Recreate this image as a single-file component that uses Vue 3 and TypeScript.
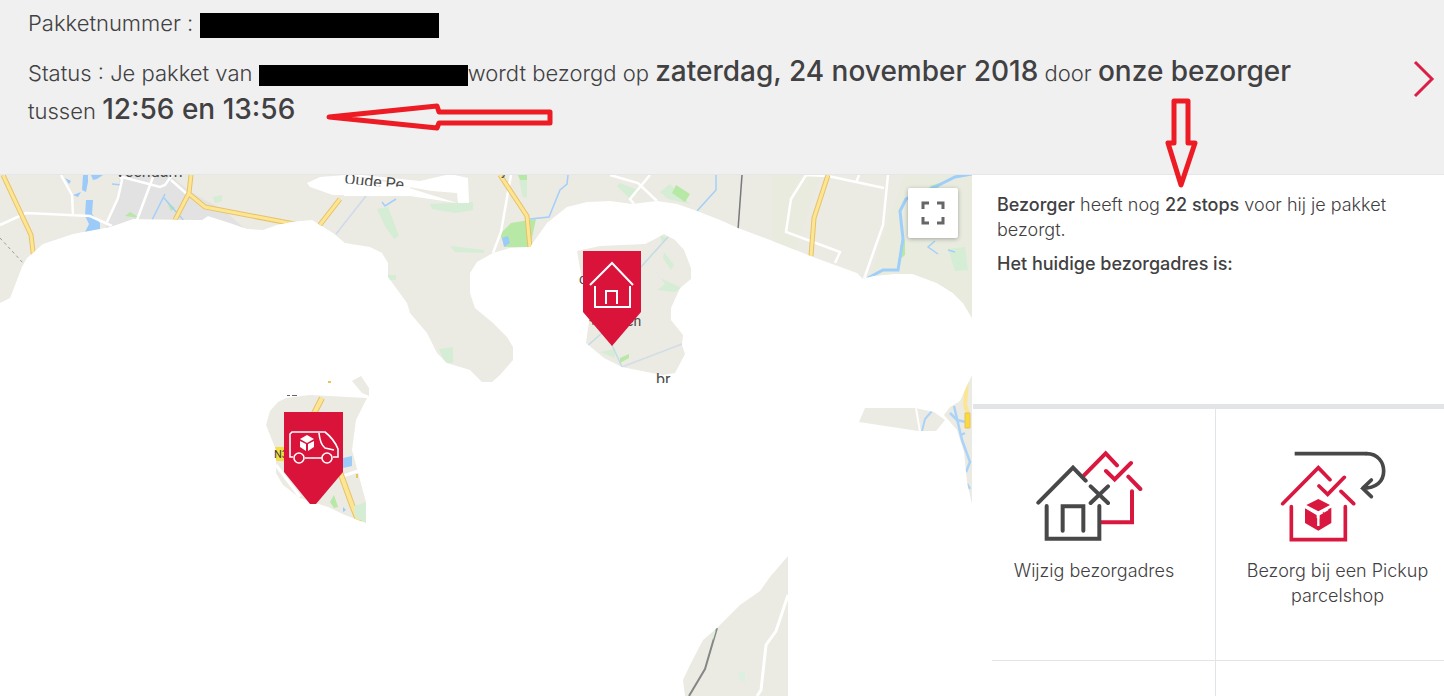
<script setup lang="ts">
interface DeliveryOption {
  id: string
  label: string
}

const options: DeliveryOption[] = [
  { id: 'address', label: 'Wijzig bezorgadres' },
  { id: 'pickup', label: 'Bezorg bij een Pickup parcelshop' },
]

const landTop =
  'M0 175H972V318L963 303L953 293L937 283L913 274H893L873 276L863 279L857 273L813 257L773 241L738 228L720 220L697 211L677 204L657 201L632 204L610 201L587 202L567 207L547 223L530 247L510 248L493 253L477 262L470 273V293L475 308L493 323L507 337L513 347V360L500 375L492 382H482L470 370L447 363L437 353L427 333L410 313L407 303L388 277V263L382 253L370 247L345 243L333 233L312 220L290 222L277 225L263 230L247 229L230 223L208 216L202 220L133 219L110 227L73 234L43 244L27 258L22 267L12 293L10 298L0 303Z'
const landHome =
  'M577 251L600 246L645 244L655 239L664 234L675 240L684 250L691 268V279L680 288L671 308V320L683 335L682 345L685 354L675 373L663 375L652 373L622 367L604 358L586 343L592 300L582 280Z'
const landVan =
  'M286 398L310 395L367 398L356 420L352 450L360 480L366 502V523L345 515L328 507L300 498L283 485L276 473V450L266 425L270 411L278 402Z'
const landEast = 'M865 408H915L934 412L945 420L936 431H918L859 422Z'
const landEdge = 'M972 375V504L967 482L964 452L957 430L944 415L950 407L960 401Z'
const landSouth =
  'M788 556V696H685L683 680L690 665L703 640L717 628L740 605L760 591L770 577Z'
</script>

<template>
  <div class="page">
    <header class="status">
      <div class="status-text">
        <p class="parcel">Pakketnummer : <span class="mask mask-number"></span></p>
        <p class="state">
          Status : Je pakket van <span class="mask mask-sender"></span>wordt bezorgd op
          <strong>zaterdag, 24 november 2018</strong> door <strong>onze bezorger</strong> tussen
          <strong>12:56 en 13:56</strong>
        </p>
      </div>
      <button class="next" type="button" aria-label="Volgende">
        <svg width="24" height="38" viewBox="0 0 24 38" fill="none" stroke="#dc1e46" stroke-width="3">
          <path d="M3 2L20 19L3 36" />
        </svg>
      </button>
      <svg class="pointer pointer-time" width="228" height="28" viewBox="326 103 228 28">
        <path d="M329 117L437 106L439 112H550V123H439L437 128Z" />
      </svg>
      <svg class="pointer pointer-stops" width="34" height="92" viewBox="1165 98 34 92">
        <path d="M1174 101H1188V143H1195L1181 185L1168 143H1174Z" />
      </svg>
    </header>

    <main class="content">
      <section class="map" aria-label="Kaart">
        <svg class="map-canvas" viewBox="0 175 972 521" preserveAspectRatio="xMinYMin slice">
          <defs>
            <clipPath id="clip-top"><path :d="landTop" /></clipPath>
            <clipPath id="clip-home"><path :d="landHome" /></clipPath>
            <clipPath id="clip-van"><path :d="landVan" /></clipPath>
            <clipPath id="clip-east"><path :d="landEast" /></clipPath>
            <clipPath id="clip-edge"><path :d="landEdge" /></clipPath>
            <clipPath id="clip-south"><path :d="landSouth" /></clipPath>
          </defs>

          <g clip-path="url(#clip-top)" fill="none">
            <path fill="#ebeae3" d="M0 175H972V400H0Z" />
            <path fill="#e2e2e2" d="M120 175H170L189 191L225 211L245 229H105L118 195Z" />
            <path fill="#e8ebde" d="M772 175H820L795 250L772 242ZM905 175H972V320L870 280L885 230Z" />
            <g fill="#d5edd5">
              <path d="M430 204L473 202V210L455 213L432 209ZM377 209L388 207L399 236L394 239L386 228ZM450 246L484 250V253L455 252ZM388 275L396 275V280H388ZM439 349L453 347V363H445ZM620 183L640 191L630 199L617 186ZM660 192L670 184L690 204L668 199ZM213 197L222 195V201L215 203ZM519 180L527 176V197L523 198ZM948 249L965 247L968 270L955 271Z" />
            </g>
            <path fill="#b8e8a5" d="M500 234L511 223L536 219L530 247H505ZM518 175H527V180H520ZM676 185L690 194L685 202L672 193ZM125 216L130 212L140 218ZM167 202L175 208L171 211ZM905 239V255L900 259V246ZM930 186L946 181L935 190Z" />
            <path fill="#9ccbfa" d="M83 175H88V182L86 192L82 190ZM91 175H103L97 179L93 180ZM65 178L71 181L69 184ZM73 195L81 192L78 197ZM86 200H93L92 214L100 223V234H84L89 224L85 216ZM502 238L508 236L510 243L504 247Z" />
            <path stroke="#a3cffa" stroke-width="1.5" d="M165 194L152 220M164 198L185 222M382 202L385 206L396 199M568 175L567 184L560 190L549 217L530 219M716 175V190L697 211M112 184L122 185" />
            <path stroke="#cfd9ec" stroke-width="1.5" d="M336 234L366 196" />
            <path stroke="#9dcffa" stroke-width="3" d="M972 174L955 177L935 187L906 199L900 211L903 239L898 270L883 270L868 278" />
            <path stroke="#a3cffa" stroke-width="1.5" d="M935 241L928 247L938 254M948 250L955 252" />
            <g stroke="#fff" stroke-width="2.5">
              <path d="M61 175L72 195L73 215M0 225L26 213L90 216L112 226M120 175L122 180L118 198L107 222M122 177L160 187L165 185L172 175M153 177L137 220M171 180L187 194M511 175L501 232L493 253M610 175L638 183L657 201M650 175L630 199L634 204M806 175L791 199L786 232L840 252L835 263M806 175L828 176L884 188M859 175L856 183M888 175L883 225L864 279" />
            </g>
            <g stroke="#e8c166" stroke-width="5">
              <path d="M3 175L31 235L34 260M191 175L189 193L175 220M188 193L205 207L310 227M340 199L319 226M500 175L527 216L530 248M828 175L814 218L811 256" />
            </g>
            <g stroke="#fce694" stroke-width="3">
              <path d="M3 175L31 235L34 260M191 175L189 193L175 220M188 193L205 207L310 227M340 199L319 226M500 175L527 216L530 248M828 175L814 218L811 256" />
            </g>
            <path stroke="#77797b" stroke-width="1.5" d="M742 175L738 230" />
            <path stroke="#999" stroke-dasharray="3 3" d="M0 238L24 264" />
            <path fill="#fff" d="M307 183L320 177L346 175L403 185L385 180L340 174H352L420 181L450 174L468 178L469 203H458L457 193L432 191L403 186L457 203L410 196L333 195L310 187Z" />
            <g class="place">
              <text class="town" x="115" y="177">Veendam</text>
              <text class="town" x="344" y="184" transform="rotate(6 344 184)">Oude Pe</text>
              <text x="501" y="175">y</text>
            </g>
            <path fill="#fff" d="M344 183L372 186L410 187V196H344Z" />
          </g>

          <g clip-path="url(#clip-home)" fill="none">
            <path fill="#ebeae3" d="M560 230H700V380H560Z" />
            <path fill="#d5edd5" d="M660 235L668 238L662 243ZM664 252L674 265L671 270L663 258ZM650 265L660 278L682 288L675 292L657 290L665 284ZM600 352L615 349V358Z" />
            <path stroke="#c2dce6" stroke-width="1.5" d="M668 237L640 268M586 347L602 333M612 345L622 367" />
            <path stroke="#d3dde8" stroke-width="1.5" d="M622 367L682 344" />
            <path fill="#b8e8a5" d="M620 358L629 354V358L620 363Z" />
          </g>
          <g class="place">
            <text x="579" y="284">c</text>
            <text x="589" y="326">+</text>
            <text x="626" y="326">en</text>
            <text class="town" x="656" y="385">br</text>
          </g>
          <path fill="#fff" d="M650 383H680V390H650Z" />
          <path fill="#d9133a" d="M583 251H641V312L612 346L583 312Z" />
          <g fill="none" stroke="#fff" stroke-width="2">
            <path d="M590 285L612 263L633 285M595 286V307H630V286M606 304V291H617V304" />
          </g>

          <path fill="#ebeae3" d="M352 381L361 376L369 388V396L362 393Z" />
          <g clip-path="url(#clip-van)" fill="none">
            <path fill="#ebeae3" d="M260 390H370V530H260Z" />
            <path stroke="#fff" stroke-width="3" d="M276 465L300 497M340 477L358 471" />
            <path stroke="#e8c166" stroke-width="6" d="M322 398L308 425M340 472L352 505L360 525" />
            <path stroke="#fce694" stroke-width="4" d="M322 398L308 425M340 472L352 505L360 525" />
            <path fill="#9ccbfa" d="M343 458L352 456V466L343 468ZM343 507L346 510L343 512Z" />
            <path fill="#b8e8a5" d="M330 502L334 495L338 507L334 508Z" />
            <path fill="#d5edd5" d="M354 506L366 502V523L355 517Z" />
            <path fill="#f6df45" d="M275 447H290V461H275Z" />
          </g>
          <text class="road" x="274" y="458">N3</text>
          <path fill="#666" d="M287 395H290V396H287ZM292 395H297V396H292Z" />
          <path fill="#e9c35c" d="M356 474H358V478H356ZM328 381H331V383H328Z" />
          <path fill="#d9133a" d="M284 412H343V472L316 504H310L284 472Z" />
          <g fill="none" stroke="#fff" stroke-width="1.6">
            <path d="M293 457H290V434L292 432H325Q334 439 338 449V457H333M305 458H322M319 433Q320 444 325 448L334 450" />
            <circle cx="299" cy="458" r="5" />
            <circle cx="327" cy="458" r="5" />
          </g>
          <path fill="#fff" d="M307 435L314 439L307 443L300 439ZM300 441L306 444V451L300 447ZM308 444L314 441V447L308 451Z" />

          <path fill="#ebeae3" :d="landEast" />
          <g clip-path="url(#clip-east)" fill="none">
            <path stroke="#fff" stroke-width="2" d="M916 408L920 432" />
            <path stroke="#a9d3f8" stroke-width="2" d="M932 411L925 419L922 431" />
          </g>
          <path fill="#ebeae3" :d="landEdge" />
          <g clip-path="url(#clip-edge)" fill="none">
            <path stroke="#a9d3f8" stroke-width="2.5" d="M954 406L962 440L970 462L966 472M950 413L957 420L966 422M961 435L965 433M967 484L970 489" />
            <path stroke="#fce694" stroke-width="4" d="M967 380L965 405L968 414" />
            <path fill="#fadb3c" stroke="#e8c166" d="M965 413H970V428H965Z" />
          </g>
          <path fill="#ebeae3" :d="landSouth" />
          <g clip-path="url(#clip-south)" fill="none">
            <path stroke="#fff" stroke-width="3" d="M788 595L776 631L766 645L761 690L757 696" />
            <path stroke="#858785" stroke-width="2" d="M717 628L705 669L689 696" />
            <path fill="#dcefe0" d="M711 635L716 630L713 640ZM738 672H745V684L740 680Z" />
          </g>
        </svg>
        <button class="fullscreen" type="button" aria-label="Volledig scherm">
          <svg width="24" height="24" viewBox="0 0 24 24" fill="none" stroke="#666" stroke-width="3">
            <path d="M2 8V2H8M16 2H22V8M22 16V22H16M8 22H2V16" />
          </svg>
        </button>
      </section>

      <aside class="side">
        <div class="info">
          <p><b>Bezorger</b> heeft nog <b>22 stops</b> voor hij je pakket bezorgt.</p>
          <p><b>Het huidige bezorgadres is:</b></p>
        </div>
        <div class="options">
          <button v-for="option in options" :key="option.id" class="option" type="button">
            <svg
              v-if="option.id === 'address'"
              class="option-icon"
              viewBox="42 30 360 288"
              fill="none"
              stroke="#48484a"
              stroke-width="12"
              stroke-linecap="round"
            >
              <g stroke="#d9183f">
                <path d="M192 106L257 40L291 76M258 93L284 118L333 69M325 110L361 147M336 154V247H244" />
              </g>
              <path d="M55 188L159 83L197 122M80 198V296H238V198M128 272V199H190V272M212 139L264 189M264 139L212 189" />
            </svg>
            <svg
              v-else
              class="option-icon"
              viewBox="114 45 360 288"
              fill="none"
              stroke="#d9183f"
              stroke-width="11"
              stroke-linecap="round"
            >
              <path stroke="#48484a" stroke-linecap="butt" d="M164 56H380" />
              <path stroke="#48484a" d="M380 56C414 56 431 82 431 108C431 140 408 160 368 160M394 135L368 160L394 185" />
              <path d="M128 206L235 98L270 134M237 153L263 178L313 127M303 169L341 206M154 215V314H316V215" />
              <path fill="#d9183f" stroke="none" d="M235 192L270 210L235 229L199 210ZM195 218L230 238V249L238 251V236L274 218V264L235 287L195 264Z" />
              <path stroke="#fff" stroke-width="7" stroke-linecap="butt" d="M194 215L235 239V273M235 239L248 232M250 230L264 222" />
            </svg>
            <span>{{ option.label }}</span>
          </button>
          <div class="option-next"></div>
          <div class="option-next"></div>
        </div>
      </aside>
    </main>
  </div>
</template>

<style>
body {
  margin: 0;
}
</style>

<style scoped>
.page {
  display: flex;
  flex-direction: column;
  height: 100vh;
  overflow: hidden;
  background: #fff;
  color: #414042;
  font-family: Inter, "Open Sans", sans-serif;
  font-weight: 300;
}
p {
  margin: 0;
}
button {
  border: 0;
  padding: 0;
  background: none;
  color: inherit;
  font: inherit;
  cursor: pointer;
}
svg {
  display: block;
}
.status {
  position: relative;
  display: flex;
  justify-content: space-between;
  box-sizing: border-box;
  flex: none;
  min-height: 175px;
  padding: 4px 8px 0 28px;
  border-bottom: 1px solid #e4e6e7;
  background: #f0f0f0;
}
.status-text {
  max-width: 1300px;
  font-size: 22px;
  line-height: 38px;
}
.state {
  margin-top: 12px;
}
.state strong {
  font-size: 28px;
  font-weight: 500;
  line-height: 28px;
}
.mask {
  display: inline-block;
  background: #000;
  vertical-align: middle;
}
.mask-number {
  width: 239px;
  height: 25px;
}
.mask-sender {
  width: 209px;
  height: 21px;
}
.next {
  align-self: flex-start;
  margin-top: 56px;
}
.pointer {
  position: absolute;
  fill: none;
  stroke: #ed1c24;
  stroke-width: 5px;
  stroke-linejoin: round;
}
.pointer-time {
  left: 326px;
  top: 103px;
}
.pointer-stops {
  left: 1165px;
  top: 98px;
  z-index: 2;
}
.content {
  display: grid;
  grid-template-columns: minmax(0, 1fr) 472px;
  flex: 1;
  min-height: 0;
}
.map {
  position: relative;
  min-height: 0;
  overflow: hidden;
}
.map-canvas {
  width: 100%;
  height: 100%;
}
.place {
  fill: #4b4b4b;
  font-family: Roboto, sans-serif;
  font-size: 14px;
  font-weight: 400;
}
.place .town {
  font-size: 16px;
}
.road {
  fill: #3c3c3c;
  font-family: Roboto, sans-serif;
  font-size: 11px;
  font-weight: 400;
}
.fullscreen {
  position: absolute;
  top: 13px;
  right: 14px;
  display: grid;
  place-items: center;
  width: 50px;
  height: 50px;
  border-radius: 2px;
  background: #fff;
  box-shadow: 0 1px 4px rgba(0, 0, 0, 0.3);
}
.side {
  display: flex;
  flex-direction: column;
  min-height: 0;
  overflow: hidden;
  font-size: 18px;
  line-height: 25px;
}
.info {
  box-sizing: border-box;
  min-height: 229px;
  padding: 17px 40px 0 25px;
}
.info p + p {
  margin-top: 9px;
}
.info b {
  font-weight: 500;
}
.options {
  display: grid;
  grid-template-columns: 1fr 1fr;
  grid-template-rows: 252px 1fr;
  flex: 1;
  margin: 0 -15px 0 1px;
  border-top: 5px solid #e2e5e6;
}
.option {
  position: relative;
  display: flex;
  flex-direction: column;
  align-items: center;
  gap: 12px;
  box-sizing: border-box;
  padding: 41px 24px 0;
}
.option::after {
  content: "";
  position: absolute;
  right: 0;
  bottom: 0;
  left: 0;
  border-bottom: 1px solid #e2e5e6;
}
.option:first-child::after {
  left: 19px;
}
.option:first-child,
.option-next:nth-child(3) {
  border-right: 1px solid #e2e5e6;
}
.option-icon {
  flex: none;
  width: 120px;
  height: 96px;
}
</style>
